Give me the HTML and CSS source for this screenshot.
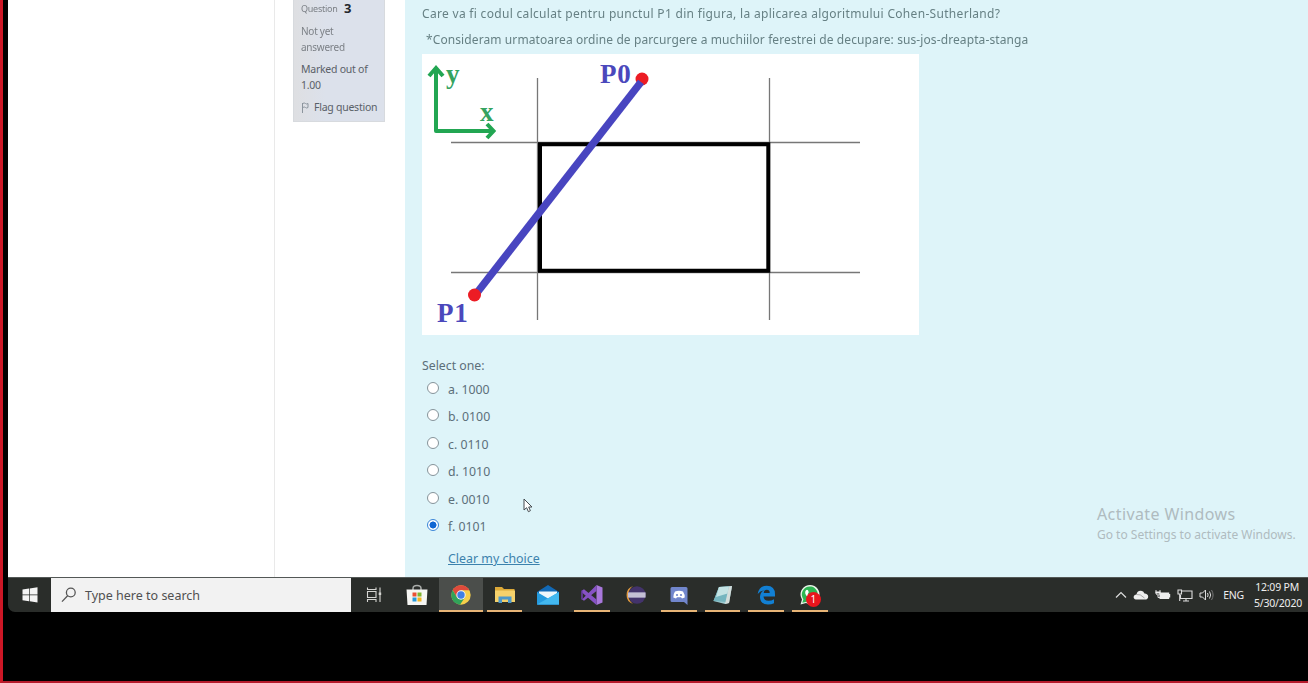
FILE: index.html
```html
<!DOCTYPE html>
<html lang="en">
<head>
<meta charset="utf-8">
<title>Quiz</title>
<link rel="stylesheet" href="styles.css">
</head>
<body>
<div class="frame">
  <div class="screen">
    <main class="page">
      <div class="drawer"></div>
      <aside class="side">
        <div class="info">
          <div class="qno"><span class="faded">Question</span> <b>3</b></div>
          <div class="state faded">Not yet<br>answered</div>
          <div class="grade">Marked out of<br>1.00</div>
          <div class="flag"><svg width="8" height="12" viewBox="0 0 8 12"><path d="M1.500 1v10M1.500 1.500q2-1 3 0t2.500 0v4q-1.500 1-2.500 0t-3 0" fill="none" stroke="#8b949d"/></svg><span>Flag question</span></div>
        </div>
      </aside>
      <section class="question">
        <p class="line one">Care va fi codul calculat pentru punctul P1 din figura, la aplicarea algoritmului Cohen-Sutherland?</p>
        <p class="line two">*Consideram urmatoarea ordine de parcurgere a muchiilor ferestrei de decupare: sus-jos-dreapta-stanga</p>
        <svg class="figure" width="497" height="281" viewBox="422 54 497 281">
          <path fill="#fff" d="M422 54h497v281H422z"/>
          <path d="M451 142.500H860M451 272.500H860M537.500 78V320M769.500 78V320" stroke="#777" stroke-width="1.300" fill="none"/>
          <path d="M540 144.300H768.300V270.700H540z" fill="none" stroke="#000" stroke-width="4"/>
          <g fill="none" stroke="#22a652" stroke-width="4"><path d="M436 68V131H492" stroke-linejoin="round"/><path d="M429 76l7-8 7 8M487 124l6.500 7-6.500 7"/></g>
          <circle cx="642" cy="79" r="6.500" fill="#ec1c24"/>
          <path d="M641 82L476 294" stroke="#4845c0" stroke-width="7.500"/>
          <circle cx="474.500" cy="295" r="6.500" fill="#ec1c24"/>
          <g class="serif"><text x="446" y="83" fill="#35a35f">y</text><text x="480" y="121" fill="#35a35f">x</text><text class="point" x="600" y="83" fill="#4b48bc">P0</text><text class="point" x="437" y="322" fill="#4b48bc">P1</text></g>
        </svg>
        <div class="prompt">Select one:</div>
        <div class="answers">
          <label><i class="radio"></i><span>a. 1000</span></label>
          <label><i class="radio"></i><span>b. 0100</span></label>
          <label><i class="radio"></i><span>c. 0110</span></label>
          <label><i class="radio"></i><span>d. 1010</span></label>
          <label><i class="radio"></i><span>e. 0010</span></label>
          <label><i class="radio on"></i><span>f. 0101</span></label>
        </div>
        <a class="clear">Clear my choice</a>
      </section>
      <div class="watermark"><div class="big">Activate Windows</div><div class="small">Go to Settings to activate Windows.</div></div>
      <svg class="cursor" width="10" height="15" viewBox="0 0 10 15"><path d="M1 1v11l2.600-2.300 1.800 4 2-1-1.700-3.700H9z" fill="#fff" stroke="#444b50"/></svg>
    </main>
    <footer class="taskbar">
      <div class="start"><svg width="16" height="16" viewBox="0 0 16 16" fill="#f4f4f4"><path d="M.5 2.500l6.500-1v6H.500zM7.700 1.400L15.500.300v7.200H7.700zM.500 8.200H7v6L.500 13.300zM7.700 8.200h7.800v7.200l-7.800-1.100z"/></svg></div>
      <div class="search"><svg width="16" height="16" viewBox="0 0 16 16" fill="none" stroke="#555" stroke-width="1.300"><circle cx="9.800" cy="5.500" r="4.400"/><path d="M6.600 8.700L1 14.600"/></svg><span>Type here to search</span></div>
      <div class="apps">
        <div class="app"><svg width="18" height="18" viewBox="0 0 18 18" fill="none" stroke="#d5d5d2" stroke-width="1.100"><path d="M2.500 5.500h8.500v6H2.500zM2.500 1.500v2h8.500v-2M2.500 16v-2.500h8.500V16M15 1.500v14.500"/><path d="M13.700 6.500h2.500v2.500h-2.500z" fill="#d5d5d2" stroke="none"/></svg></div>
        <div class="app"><svg width="22" height="22" viewBox="0 0 22 22"><path d="M7 6V4.500Q7 1.500 11 1.500t4 3V6" fill="none" stroke="#a9aca9" stroke-width="1.500"/><path d="M.5 5.500h21L20.500 21h-19z" fill="#f6f6f3"/><path d="M6.500 8.500h4v4h-4z" fill="#ea5034"/><path d="M11.500 8.500h4v4h-4z" fill="#80b52f"/><path d="M6.500 13.500h4v4h-4z" fill="#2798d9"/><path d="M11.500 13.500h4v4h-4z" fill="#f3b51f"/></svg></div>
        <div class="app run active"><svg width="20" height="20" viewBox="0 0 20 20"><circle cx="10" cy="10" r="9.700" fill="#f5cf4a"/><path d="M1.600 5.100A9.700 9.700 0 0 1 18.400 5.300H10L6 12.400z" fill="#df4a3c"/><path d="M1.600 5.100A9.700 9.700 0 0 0 9 19.700L14 12.300 6 12.400z" fill="#31a35a"/><circle cx="10" cy="10" r="4.700" fill="#f4f4f0"/><circle cx="10" cy="10" r="3.700" fill="#3f7fe4"/></svg></div>
        <div class="app run"><svg width="20" height="18" viewBox="0 0 20 18"><path d="M0 1h7l2 2h10.500v13H0z" fill="#dca938"/><path d="M0 4.500h20V16H0z" fill="#f5d16b"/><path d="M3.500 17v-6.500h13V17h-3.500v-3.500H7V17z" fill="#4c98ca"/></svg></div>
        <div class="app"><svg width="22" height="20" viewBox="0 0 22 20"><path d="M0 7L11 0l11 7v12.500H0z" fill="#1269b5"/><path d="M2 6.500h18v3L11 14 2 9.500z" fill="#eef7fc"/><path d="M0 7l11 6.500L22 7v12.500H0z" fill="#249bdf"/><path d="M0 19.500L22 7v12.500z" fill="#43b8ef"/></svg></div>
        <div class="app run"><svg width="22" height="22" viewBox="0 0 22 22"><path d="M15.500 1L21.500 3.500v15l-6 2.500z" fill="#a978dc"/><path d="M1 6.500L3 5.300 15.500 15.500V21L1 8.500zM1 15.500L15.500 1v6L3 16.700z" fill="#8652c4"/><path d="M1 6.500v9" stroke="#6d3dae" stroke-width="1.500"/></svg></div>
        <div class="app"><svg width="22" height="20" viewBox="0 0 22 20"><path d="M9 1A9.500 9.500 0 0 0 9 19 11 11 0 0 1 9 1z" fill="#e29a3f"/><circle cx="13" cy="10" r="8.700" fill="#43336b"/><path d="M4 7.200h17.500v5.600H4z" fill="#aaa4c4"/><path d="M4 9h17.500M4 11h17.500" stroke="#dddbe5"/></svg></div>
        <div class="app run"><svg width="18" height="19" viewBox="0 0 18 19"><path d="M2 1h14q1.500 0 1.500 1.500V19L14 16H2Q.5 16 .500 14.500v-12Q.500 1 2 1z" fill="#7186cc"/><path d="M5 5.500Q9 4 13 5.500q2 3 1.700 6l-2.700 1-1-1.200H7L6 12.500l-2.700-1Q3.200 8 5 5.500z" fill="#fff"/><circle cx="7" cy="9" r="1.100" fill="#7186cc"/><circle cx="11" cy="9" r="1.100" fill="#7186cc"/></svg></div>
        <div class="app run"><svg width="20" height="20" viewBox="0 0 20 20"><path d="M6 2l13-1-3 17-4 1L.500 16z" fill="#a0cbd0"/><path d="M6 2l10-.500L13 17 .500 16z" fill="#75b5bf"/><path d="M6 2l10-.500-1.500 7L3 12z" fill="#c4e3e4"/><path d="M16 1.500l3-.500-3 17-4 1z" fill="#d4dddb"/></svg></div>
        <div class="app run"><svg width="19" height="20" viewBox="0 0 19 20"><path d="M.700 9Q2 .700 9.800.700q8.200 0 8.200 8.600v2.200H6.500q.3 4.200 5 4.200 3 0 5.500-1.500v4Q14.500 19.500 11 19.500q-8-.200-8-7.500 0-4.500 4-6.800Q3 5.700.700 9zM6.700 8H12.700Q12.700 4.800 9.800 4.800 7 4.800 6.700 8z" fill="#1280d4"/></svg></div>
        <div class="app run chat"><svg width="22" height="22" viewBox="0 0 22 22"><path d="M1.500 20.500L3 15.500A9.500 9.500 0 1 1 7 19z" fill="#eaf4e9"/><path d="M3.300 18.700l1.100-3.500A8 8 0 1 1 7.500 17.700z" fill="#2fb553"/><path d="M7 6.300q1-1 2 0l.8 1.900-.9 1.300q1 2 3 2.900l1.300-1.300 2.300 1.100q-.2 2.500-2.700 2.500-5.300-.7-6.600-5.500Q6 7.300 7 6.300z" fill="#fff"/></svg><span class="badge">1</span></div>
      </div>
      <div class="tray">
        <svg width="12" height="8" viewBox="0 0 12 8"><path d="M1 6.500l5-5 5 5" fill="none" stroke="#ddd" stroke-width="1.200"/></svg>
        <svg width="16" height="10" viewBox="0 0 16 10"><path d="M3 9.500Q.300 9 .700 6.500 1.200 4.500 3.500 4.500 4 1 7.500.800 10.500.500 11.500 3.500q3.500.200 3.700 3.200Q15 9.500 12 9.500z" fill="#eee"/><path d="M3.500 4.500Q7 3.500 11.500 8" stroke="#aaa" fill="none"/></svg>
        <svg width="16" height="12" viewBox="0 0 16 12"><path d="M4.500 3.500h9.700V5h1v3.500h-1V10H4.500z" fill="#eee"/><path d="M1 1v3q0 2 2 2t2-2V1M3 6v2.500h2" fill="none" stroke="#ddd"/><path d="M.500 2.500h5v2h-5z" fill="#eee"/></svg>
        <svg width="16" height="13" viewBox="0 0 16 13" fill="none" stroke="#ddd" stroke-width="1.100"><path d="M5 2h10v7.500H3.500V6M6 12h6M9 9.500V12"/><path d="M1 1h3.500v4H1zM2.700 5v7"/></svg>
        <svg width="15" height="12" viewBox="0 0 15 12" fill="none" stroke="#ddd"><path d="M1 4h2.500l3-3v10l-3-3H1z"/><path d="M8.500 4q1.200 2 0 4M10.500 2.500q2.300 3.500 0 7"/><path d="M12.500 1q3.200 5 0 10" stroke="#777"/></svg>
        <span class="lang">ENG</span>
      </div>
      <div class="clock"><div class="time">12:09 PM</div><div>5/30/2020</div></div>
    </footer>
  </div>
</div>
</body>
</html>
```

FILE: styles.css
```css
* { box-sizing: border-box; }
body { margin: 0; background: #000; font-family: "Noto Sans", "Open Sans", sans-serif; }
.frame { width: 1308px; height: 683px; border-left: 3px solid #cd1726; border-bottom: 2px solid #b51a2b; padding-left: 5px; background: #000; overflow: hidden; }
.screen { height: 612px; display: flex; flex-direction: column; overflow: hidden; border-bottom-left-radius: 7px; }
.page { position: relative; height: 577px; display: flex; background: #fff; color: #5c6f79; font-size: 12px; }
.drawer { width: 267px; border-right: 1px solid #e9e9e9; }
.side { width: 130px; padding-left: 18px; }
.info { width: 92px; height: 122px; background: linear-gradient(90deg, #dedfe2, #dce1eb 35%); padding: 1px 0 0 7px; color: #5a6068; font-size: 10.5px; letter-spacing: -.25px; line-height: 15.5px; white-space: nowrap; border: 1px solid #d7dade; border-top: 0; }
.qno { display: flex; gap: 8px; align-items: center; height: 16px; }
.qno .faded { width: 35px; font-size: 9px; }
.qno b { font-size: 13px; color: #23272e; }
.faded { color: #7c8086; filter: blur(.6px); }
.state { margin-top: 7px; font-size: 10px; }
.grade { margin-top: 7px; }
.flag { margin-top: 7px; display: flex; gap: 5px; align-items: center; }
.question { flex: 1; background: #def4f9; padding-left: 17px; }
.line { margin: 0; height: 26px; line-height: 27px; font-size: 12px; color: #668084; filter: blur(.6px); white-space: nowrap; }
.one { letter-spacing: .31px; }
.two { padding-left: 4px; letter-spacing: .1px; }
.figure { display: block; margin-top: 2px; }
.serif { font: bold 27px "Liberation Serif", serif; }
.point { letter-spacing: .8px; }
.prompt { margin-top: 22px; line-height: 18px; font-size: 12.3px; }
.answers { padding-left: 5px; font-size: 12.3px; }
.answers label { display: flex; align-items: center; height: 27.5px; gap: 9px; }
.answers span { padding-top: 1px; }
.radio { width: 12px; height: 12px; border: 1px solid #85939a; border-radius: 50%; background: #fff; margin-top: -2px; }
.radio.on { border-color: #3c86d8; background: radial-gradient(circle, #1267d3 0 3.2px, #fff 3.8px); }
.clear { display: inline-block; margin: 10px 0 0 26px; color: #3c82ad; text-decoration: underline; line-height: 18px; font-size: 12.4px; }
.watermark { position: absolute; left: 1089px; top: 503px; color: #afbbbf; white-space: nowrap; }
.big { font-size: 16px; line-height: 23px; letter-spacing: .4px; }
.small { font-size: 12px; line-height: 18px; }
.cursor { position: absolute; left: 515px; top: 498px; }
.taskbar { height: 35px; display: flex; background: #2a2d2a; color: #eee; border-top: 1px solid #535856; }
.start { width: 43px; padding-left: 14px; display: flex; align-items: center; }
.search { width: 300px; background: #f2f2f2; color: #505050; display: flex; align-items: center; gap: 8px; padding-left: 10px; font-size: 12.5px; }
.apps { display: flex; padding-left: 1px; }
.app { position: relative; width: 43.6px; height: 34px; display: flex; align-items: center; justify-content: center; }
.run::after { content: ""; position: absolute; left: 4px; right: 4px; bottom: 0; height: 2px; background: #e7b476; }
.active { background: #4b4e4b; }
.active::after { left: 0; right: 0; }
.badge { position: absolute; left: 18px; top: 14px; width: 15px; height: 15px; border-radius: 50%; background: #e9151d; color: #fff; font-size: 10px; line-height: 15px; text-align: center; }
.tray { margin-left: auto; display: flex; align-items: center; gap: 6px; }
.lang { font-size: 10.5px; margin-left: 3px; letter-spacing: -.2px; }
.clock { width: 64px; padding: 1px 6px 0 0; font-size: 10.5px; line-height: 16px; text-align: right; white-space: nowrap; letter-spacing: -.2px; }
.time { padding-right: 3px; }
```
